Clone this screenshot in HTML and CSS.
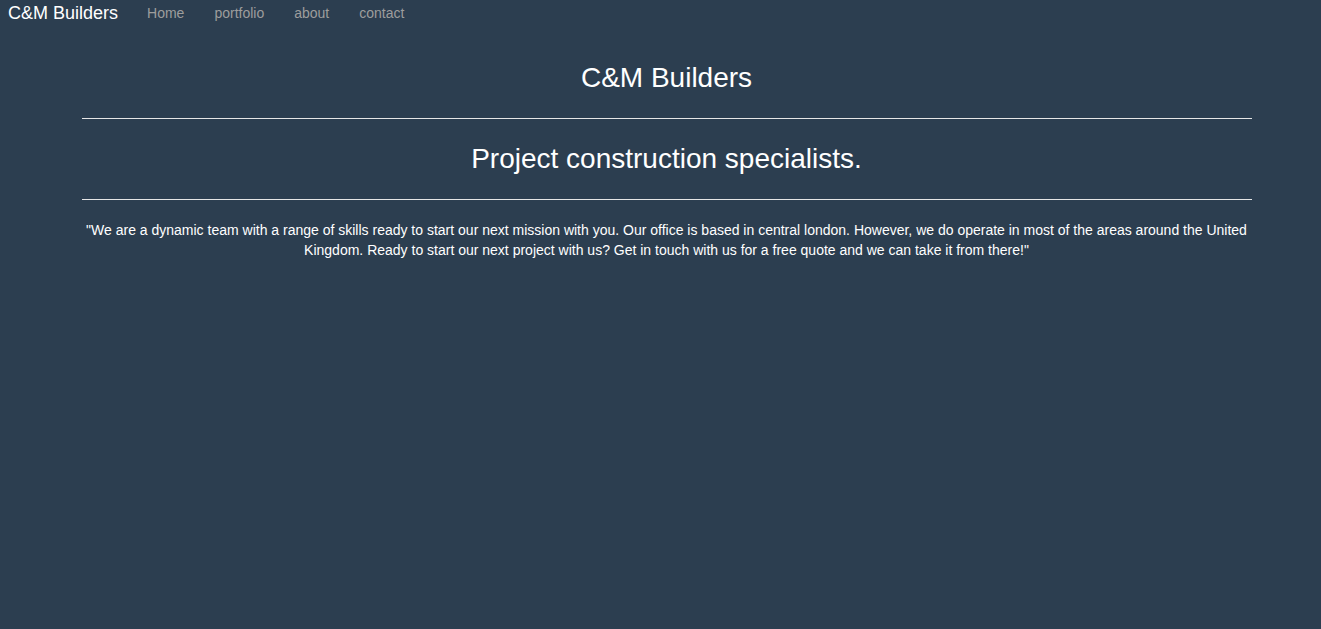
FILE: index.html
```html
<!DOCTYPE html>
<html>
<head>
<meta charset="utf-8">
<link rel="stylesheet" href="styles.css">
</head>
<body>
<nav class="navbar">
  <a class="brand" href="#">C&amp;M Builders</a>
  <ul class="nav-links">
    <li><a href="#">Home</a></li>
    <li><a href="#">portfolio</a></li>
    <li><a href="#">about</a></li>
    <li><a href="#">contact</a></li>
  </ul>
</nav>
<main class="container">
  <h1 class="title">C&amp;M Builders</h1>
  <hr class="rule">
  <h2 class="subtitle">Project construction specialists.</h2>
  <hr class="rule">
  <p class="intro">"We are a dynamic team with a range of skills ready to start our next mission with you. Our office is based in central london. However, we do operate in most of the areas around the United Kingdom. Ready to start our next project with us? Get in touch with us for a free quote and we can take it from there!"</p>
</main>
</body>
</html>
```
FILE: styles.css
```css
html, body {
  margin: 0;
  padding: 0;
}
body {
  background: #2c3e50;
  color: #ffffff;
  font-family: "Liberation Sans", Arial, sans-serif;
  font-size: 14px;
  line-height: 20px;
  min-height: 629px;
}
.navbar {
  display: flex;
  align-items: center;
  height: 26px;
  padding: 0 8px;
}
.brand {
  color: #ffffff;
  text-decoration: none;
  font-size: 18px;
  margin-right: 14px;
}
.nav-links {
  display: flex;
  list-style: none;
  margin: 0;
  padding: 0;
}
.nav-links a {
  display: block;
  padding: 0 15px;
  color: #9d9d9d;
  text-decoration: none;
  font-size: 14px;
}
.container {
  width: 1170px;
  margin: 0 0 0 calc(50% - 579px);
  text-align: center;
}
.title {
  font-size: 28px;
  font-weight: normal;
  margin: 37px 0 25px;
  line-height: 30px;
}
.rule {
  border: 0;
  border-top: 1px solid #e6e6e6;
  margin: 0;
}
.subtitle {
  font-size: 28px;
  font-weight: normal;
  line-height: 32px;
  margin: 24px 0 24px;
}
.intro {
  margin: 20px 0 0;
  padding: 0 4px;
}
```
